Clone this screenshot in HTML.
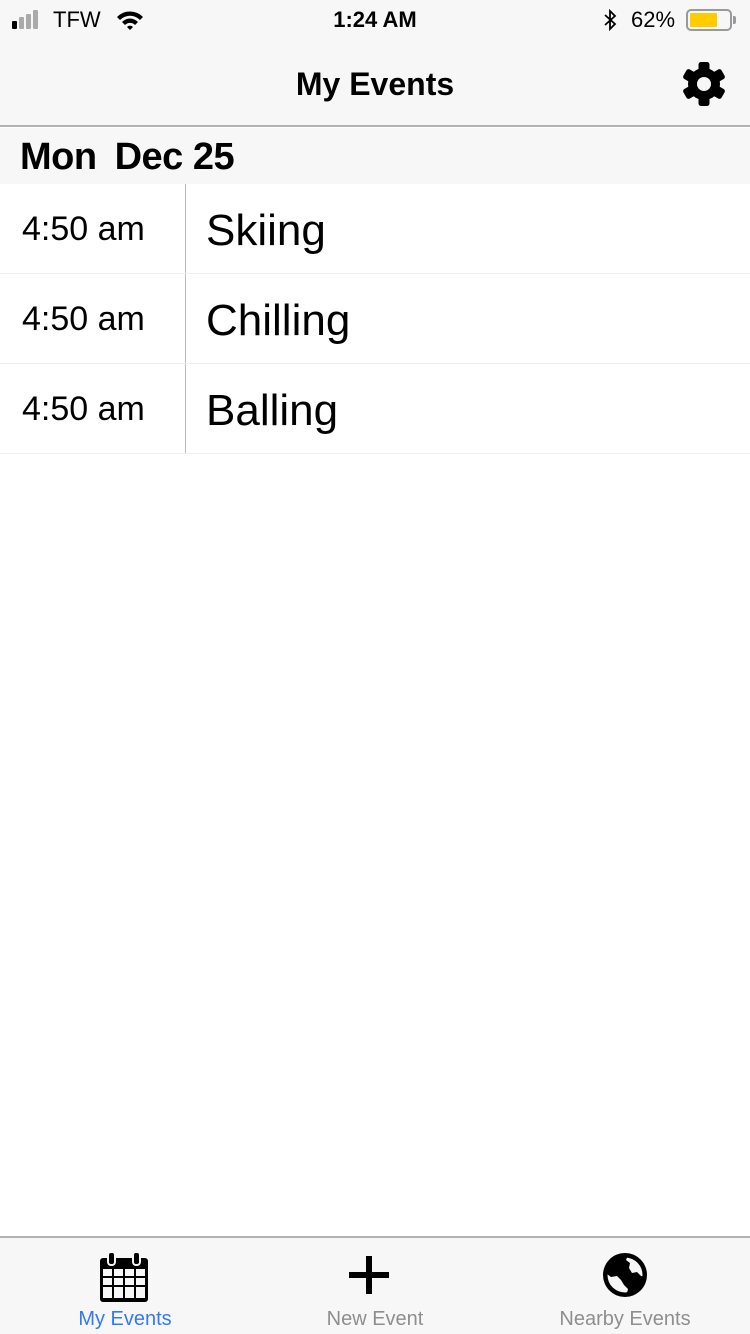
<!DOCTYPE html>
<html><head><meta charset="utf-8"><style>
*{margin:0;padding:0;box-sizing:border-box}
body{width:750px;height:1334px;background:#fff;font-family:"Liberation Sans",Arial,sans-serif;position:relative;overflow:hidden;color:#000}
.abs{position:absolute}
#top{left:0;top:0;width:750px;height:127px;background:#f7f7f7;border-bottom:2px solid #b2b2b2}
#sec{left:0;top:128px;width:750px;height:56px;background:#f7f7f7}
.row{position:absolute;left:0;width:750px;height:90px;border-bottom:1px solid #eee}
.row .t{position:absolute;left:22px;top:26px;font-size:34px}
.row .n{position:absolute;left:206px;top:22px;font-size:44px}
.row .d{position:absolute;left:185px;top:0;width:1px;height:89px;background:#bbb}
#tab{left:0;top:1236px;width:750px;height:98px;background:#f7f7f7;border-top:2px solid #b2b2b2}
.lbl{position:absolute;top:1308px;font-size:20px;color:#8e8e8e;text-align:center;width:250px}
</style></head><body>
<div id="top" class="abs"></div>
<div class="abs" style="left:12px;top:21px;width:5px;height:8px;background:#000;border-radius:1px"></div>
<div class="abs" style="left:19px;top:17px;width:5px;height:12px;background:#aaa;border-radius:1px"></div>
<div class="abs" style="left:26px;top:14px;width:5px;height:15px;background:#aaa;border-radius:1px"></div>
<div class="abs" style="left:33px;top:10px;width:5px;height:19px;background:#aaa;border-radius:1px"></div>
<div class="abs" style="left:53px;top:7px;font-size:22px">TFW</div>
<svg class="abs" style="left:116px;top:9px" width="28" height="22" viewBox="0 0 28 22"><path d="M1 8 A18 18 0 0 1 27 8 L24 11 A14 14 0 0 0 4 11Z M6 13 A11 11 0 0 1 22 13 L19 16 A7 7 0 0 0 9 16Z M11 18 A4 4 0 0 1 17 18 L14 21Z" fill="#000"/></svg>
<div class="abs" style="left:0;width:750px;top:7px;text-align:center;font-size:22px;font-weight:bold">1:24 AM</div>
<svg class="abs" style="left:602px;top:9px" width="16" height="22" viewBox="0 0 16 22"><path d="M3 6 L13 15 L8 20 V2 L13 7 L3 16" fill="none" stroke="#000" stroke-width="1.8"/></svg>
<div class="abs" style="left:631px;top:7px;font-size:22px">62%</div>
<div class="abs" style="left:686px;top:9px;width:46px;height:22px;border:2px solid #999;border-radius:5px"></div>
<div class="abs" style="left:690px;top:13px;width:27px;height:14px;background:#fc0;border-radius:1px"></div>
<div class="abs" style="left:733px;top:16px;width:3px;height:8px;background:#999;border-radius:0 2px 2px 0"></div>
<div class="abs" style="left:0;width:750px;top:66px;text-align:center;font-size:32px;font-weight:bold">My Events</div>
<svg class="abs" style="left:682px;top:62px" width="44" height="44" viewBox="-22 -22 44 44"><g fill="#000"><circle r="16"/><g id="tt"><rect x="-5.5" y="-22" width="11" height="12" rx="2.5"/></g><use href="#tt" transform="rotate(60)"/><use href="#tt" transform="rotate(120)"/><use href="#tt" transform="rotate(180)"/><use href="#tt" transform="rotate(240)"/><use href="#tt" transform="rotate(300)"/></g><circle r="7" fill="#f7f7f7"/></svg>
<div id="sec" class="abs"><div style="position:absolute;left:20px;top:8px;font-size:38px;font-weight:bold;letter-spacing:-0.5px"><span>Mon</span><span style="margin-left:18px">Dec 25</span></div></div>
<div class="row" style="top:184px"><div class="t">4:50 am</div><div class="d"></div><div class="n">Skiing</div></div>
<div class="row" style="top:274px"><div class="t">4:50 am</div><div class="d"></div><div class="n">Chilling</div></div>
<div class="row" style="top:364px"><div class="t">4:50 am</div><div class="d"></div><div class="n">Balling</div></div>
<div id="tab" class="abs"></div>
<svg class="abs" style="left:99px;top:1251px" width="50" height="52" viewBox="0 0 50 52"><rect x="1" y="7" width="48" height="44" rx="3" fill="#000"/><rect x="9" y="1" width="7" height="13" rx="3" fill="#000" stroke="#f7f7f7" stroke-width="2"/><rect x="34" y="1" width="7" height="13" rx="3" fill="#000" stroke="#f7f7f7" stroke-width="2"/><g fill="#f7f7f7"><rect x="4" y="18" width="9" height="7"/><rect x="15" y="18" width="9" height="7"/><rect x="26" y="18" width="9" height="7"/><rect x="37" y="18" width="9" height="7"/><rect x="4" y="27" width="9" height="7"/><rect x="15" y="27" width="9" height="7"/><rect x="26" y="27" width="9" height="7"/><rect x="37" y="27" width="9" height="7"/><rect x="4" y="36" width="9" height="11"/><rect x="15" y="36" width="9" height="11"/><rect x="26" y="36" width="9" height="11"/><rect x="37" y="36" width="9" height="11"/></g></svg>
<div class="abs" style="left:349px;top:1272px;width:40px;height:6px;background:#000"></div>
<div class="abs" style="left:366px;top:1256px;width:6px;height:38px;background:#000"></div>
<svg class="abs" style="left:603px;top:1253px" width="44" height="44" viewBox="0 0 44 44"><defs><clipPath id="cp"><circle cx="22" cy="22" r="17.5"/></clipPath></defs><circle cx="22" cy="22" r="22" fill="#000"/><g clip-path="url(#cp)" fill="#f7f7f7"><path d="M26 0 L44 0 L44 24 L38 23 L34 19 L29 20 L26 15 L27 10 L23 7 Z"/><path d="M0 21 L4 21 L8 24 L14 23 L18 27 L21 32 L25 36 L23 44 L0 44 Z"/></g></svg>
<div class="lbl" style="left:0;color:#3478f6">My Events</div>
<div class="lbl" style="left:250px">New Event</div>
<div class="lbl" style="left:500px">Nearby Events</div>
</body></html>
